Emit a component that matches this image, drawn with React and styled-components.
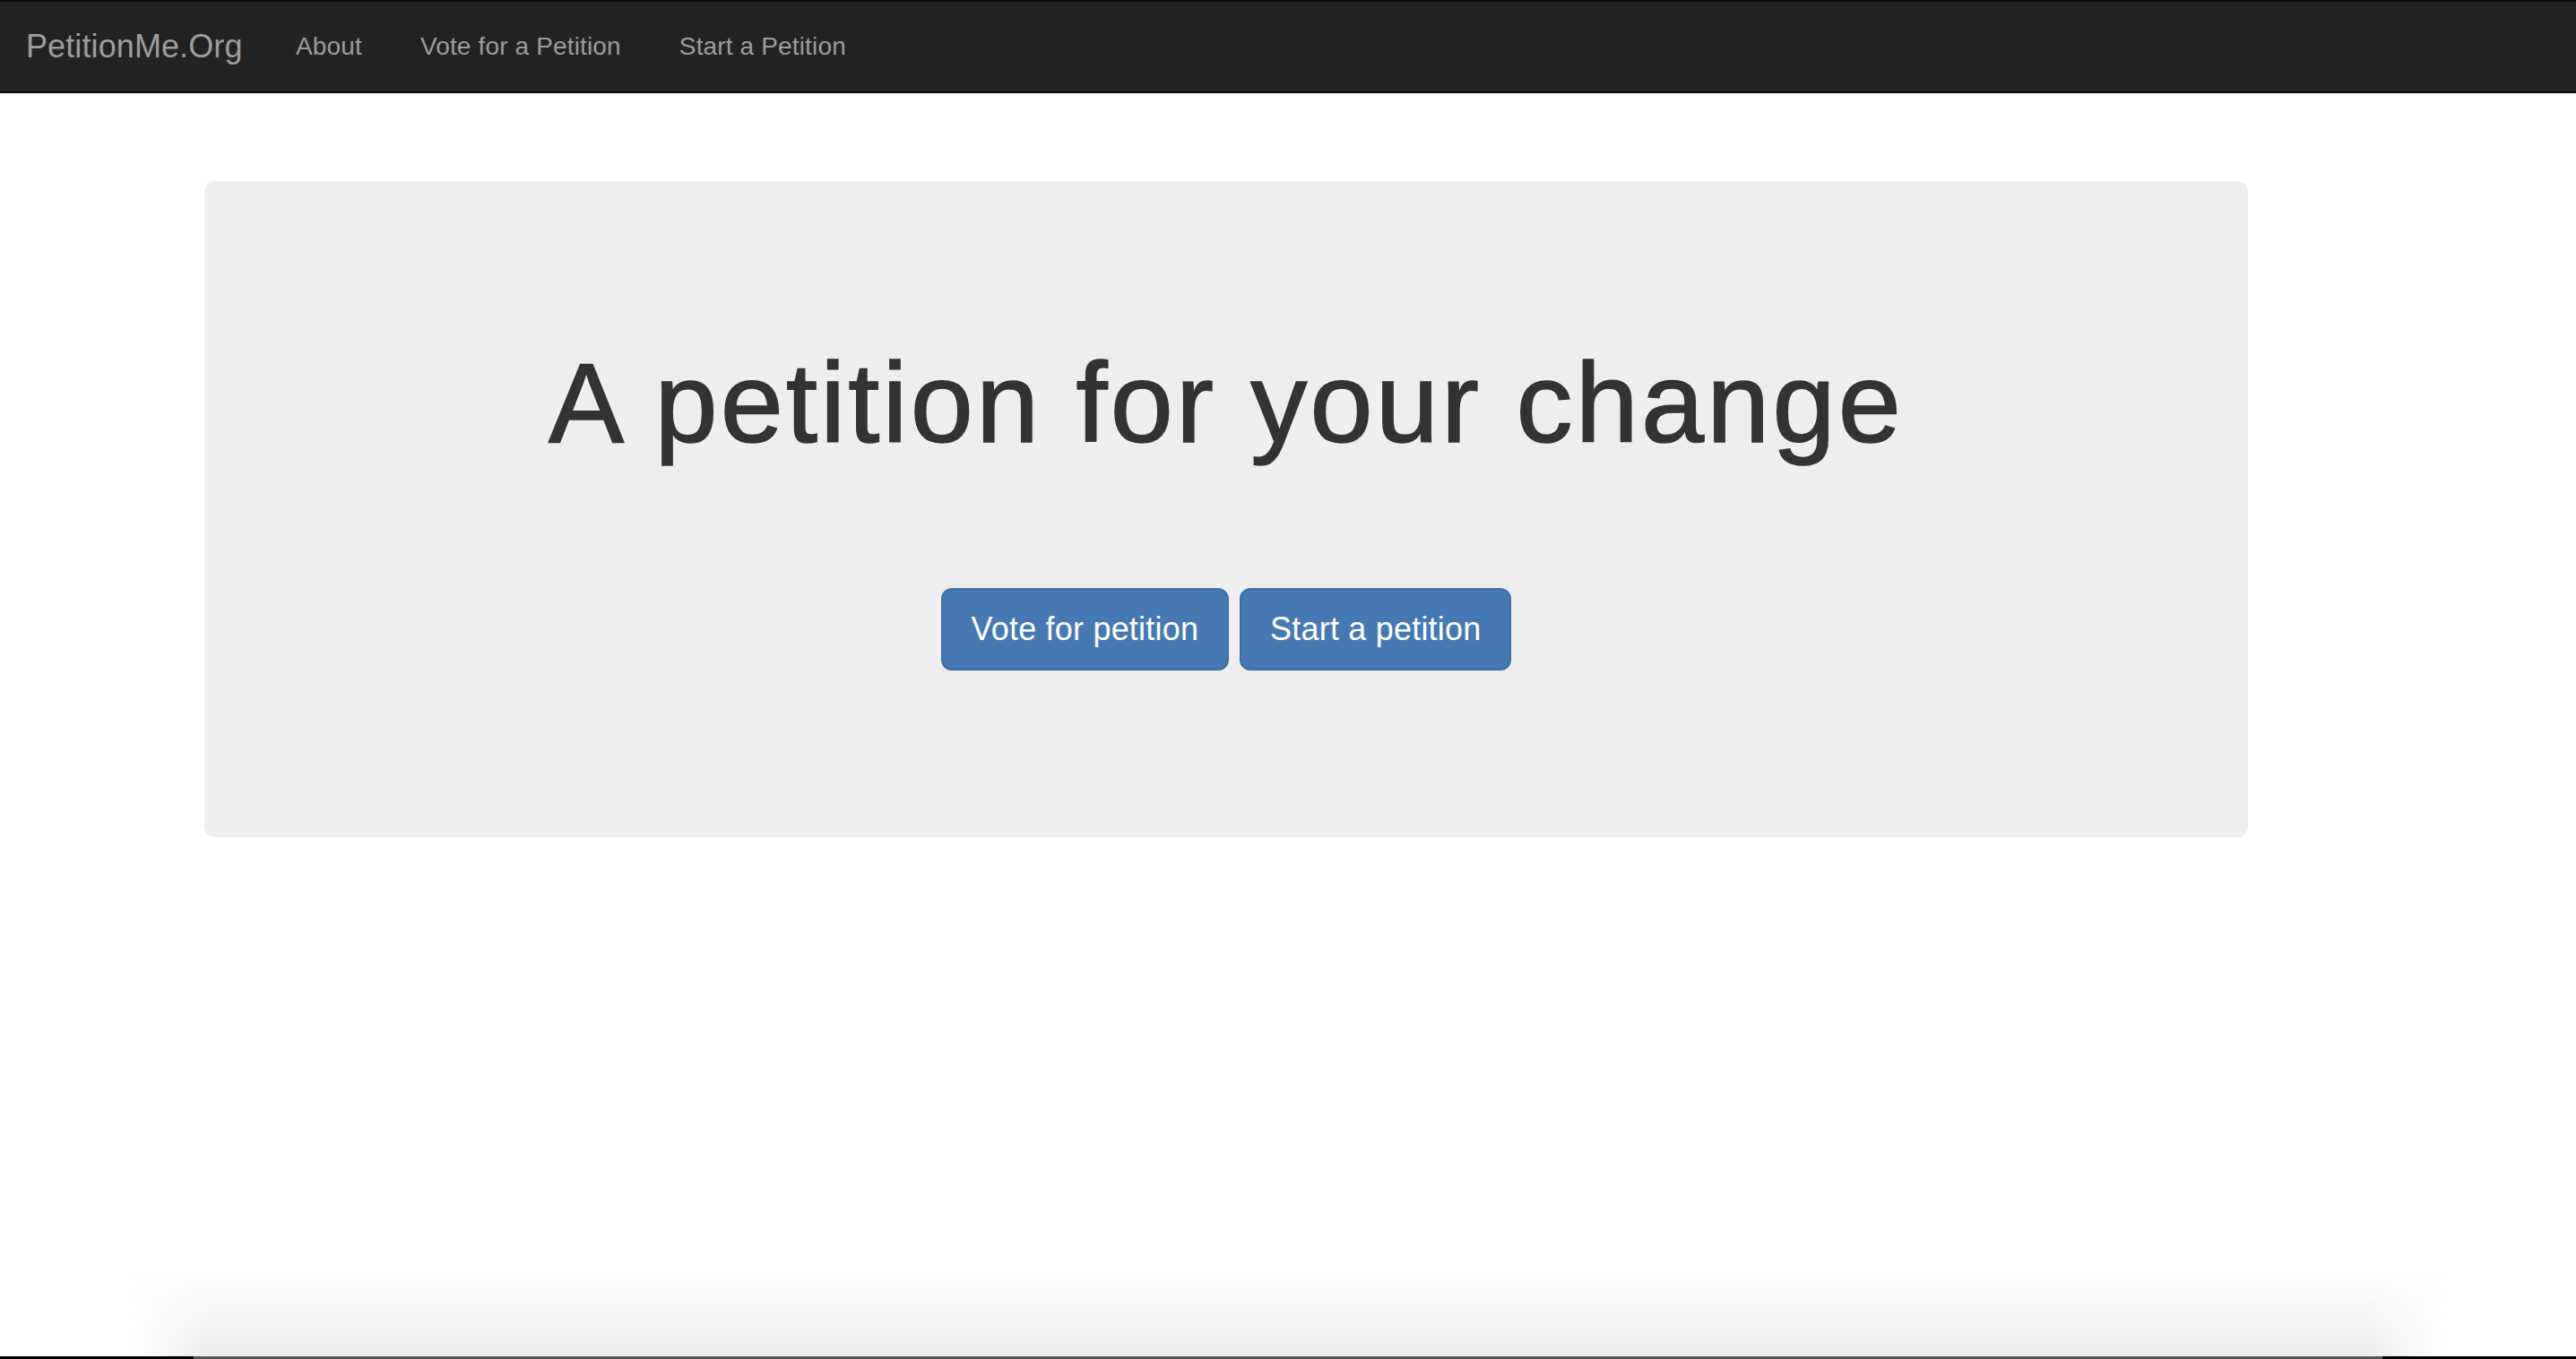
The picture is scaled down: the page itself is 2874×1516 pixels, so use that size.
import React from "react";
import styled, { createGlobalStyle } from "styled-components";

const GlobalStyle = createGlobalStyle`
  html, body {
    margin: 0;
    padding: 0;
    background: #ffffff;
  }
  body {
    font-family: "Liberation Sans", Arial, Helvetica, sans-serif;
    color: #333333;
  }
  * { box-sizing: border-box; }
`;

const Page = styled.div`
  height: 100vh;
  display: flex;
  flex-direction: column;
  overflow: hidden;
`;

const Navbar = styled.nav`
  display: flex;
  align-items: center;
  flex: none;
  height: 104px;
  background: #222222;
  border-top: 2px solid #0a0a0a;
  border-bottom: 2px solid #080808;
`;

const Brand = styled.a`
  display: block;
  padding: 0 27px 0 29px;
  font-size: 36px;
  line-height: 40px;
  color: #9d9d9d;
  text-decoration: none;
  letter-spacing: 0.1px;
`;

const NavList = styled.ul`
  display: flex;
  list-style: none;
  margin: 0;
  padding: 0;
`;

const NavLink = styled.a`
  display: block;
  padding: 0 32.5px;
  font-size: 28px;
  line-height: 40px;
  color: #9d9d9d;
  text-decoration: none;
  letter-spacing: 0.15px;
`;

const Main = styled.main`
  flex: none;
  padding: 98px 0 0 228px;
`;

const Jumbotron = styled.section`
  width: 2280px;
  background: #eeeeee;
  border-radius: 12px;
  padding: 96px 120px;
  text-align: center;
`;

const Heading = styled.h1`
  margin: 83px 0 0;
  font-size: 126px;
  line-height: 1.1;
  font-weight: 400;
  color: #333333;
  letter-spacing: 3.2px;
  -webkit-text-stroke: 1.6px #333333;
`;

const ButtonRow = styled.div`
  display: flex;
  justify-content: center;
  gap: 12px;
  margin: 136px 0 90px;
`;

const Button = styled.a`
  display: inline-block;
  padding: 20px 32px;
  font-size: 36px;
  line-height: 48px;
  color: #ffffff;
  background: #4679b2;
  border: 2px solid #3e6ea5;
  border-radius: 12px;
  text-decoration: none;
  letter-spacing: 0.2px;
`;

const Spacer = styled.div`
  flex: 1;
`;

const ShadowZone = styled.div`
  flex: none;
  height: 95px;
  margin: 0 150px;
  background: linear-gradient(to bottom, rgba(236, 236, 236, 0), #ececec);
  -webkit-mask-image: linear-gradient(to right, transparent 0, #000 80px, #000 calc(100% - 80px), transparent 100%);
  mask-image: linear-gradient(to right, transparent 0, #000 80px, #000 calc(100% - 80px), transparent 100%);
`;

const BottomStrip = styled.div`
  flex: none;
  display: flex;
  justify-content: center;
  height: 3px;
  background: #000000;
`;

const WindowEdge = styled.div`
  width: 2442px;
  height: 100%;
  background: #555555;
`;

export default function App() {
  return (
    <>
      <GlobalStyle />
      <Page>
        <Navbar>
          <Brand href="#">PetitionMe.Org</Brand>
          <NavList>
            <li><NavLink href="#">About</NavLink></li>
            <li><NavLink href="#">Vote for a Petition</NavLink></li>
            <li><NavLink href="#">Start a Petition</NavLink></li>
          </NavList>
        </Navbar>
        <Main>
          <Jumbotron>
            <Heading>A petition for your change</Heading>
            <ButtonRow>
              <Button href="#">Vote for petition</Button>
              <Button href="#">Start a petition</Button>
            </ButtonRow>
          </Jumbotron>
        </Main>
        <Spacer />
        <ShadowZone />
        <BottomStrip>
          <WindowEdge />
        </BottomStrip>
      </Page>
    </>
  );
}
